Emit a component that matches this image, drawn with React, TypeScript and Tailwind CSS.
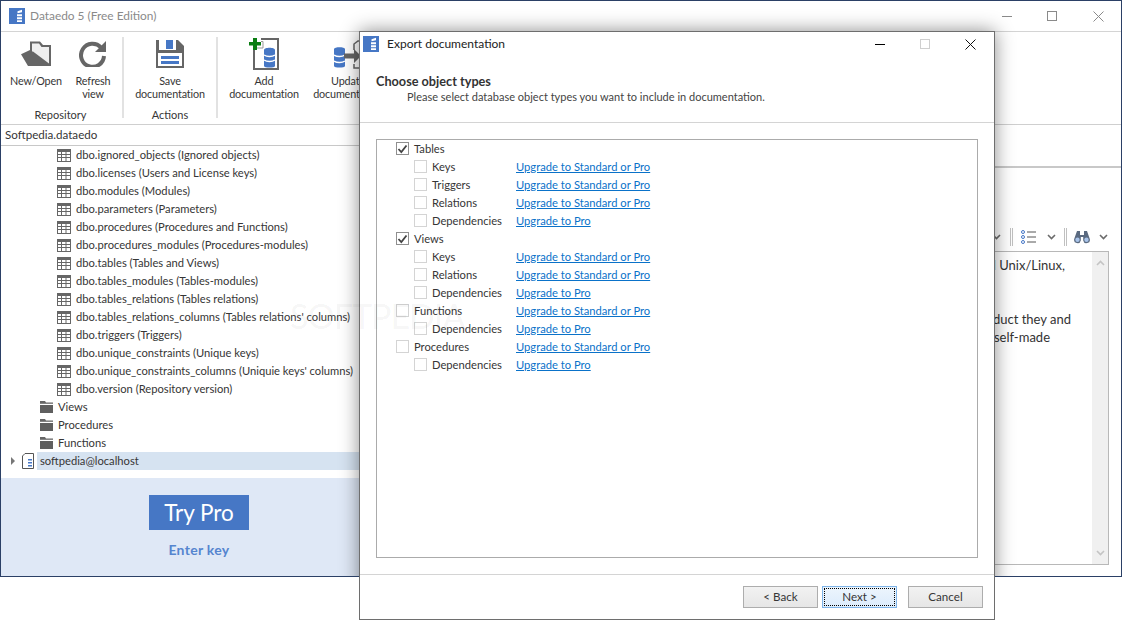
import React from "react";

const F = "font-['Lato','Open_Sans',sans-serif]";

function Logo({ s = 16 }: { s?: number }) {
  return (
    <svg width={s} height={s} viewBox="0 0 16 16" className="shrink-0">
      <rect width="16" height="16" fill="#4677c5" />
      <path d="M8.500 3.200 13 1.800v2.400L8.500 5.200zM8 6.200h5v2H8zM8 9.200h5v2H8zM8 12.200h5V14H8z" fill="#fff" />
    </svg>
  );
}

function GridIcon() {
  return (
    <svg width="14" height="13" viewBox="0 0 14 13" className="shrink-0">
      <rect width="14" height="13" fill="#666" />
      <path d="M1 3h3v2H1zM5 3h3.500v2H5zM9.500 3H13v2H9.500zM1 6h3v2H1zM5 6h3.500v2H5zM9.500 6H13v2H9.500zM1 9h3v3H1zM5 9h3.500v3H5zM9.500 9H13v3H9.500z" fill="#fff" />
    </svg>
  );
}

function Folder() {
  return (
    <svg width="15" height="14" viewBox="0 0 15 14" className="shrink-0">
      <path d="M1 1h5l1 1.500h7V4H1z" fill="#666" />
      <path d="M1 5h13v8H1z" fill="#5f5f5f" />
      <path d="M1 3.800h13V5H1z" fill="#fff" />
    </svg>
  );
}

function Chevron({ up = false, color = "#6b6b6b" }: { up?: boolean; color?: string }) {
  return (
    <svg width="9" height="6" viewBox="0 0 9 6" className="shrink-0">
      <path d={up ? "M1 5l3.500-3.500L8 5" : "M1 1l3.500 3.500L8 1"} fill="none" stroke={color} strokeWidth="1.600" />
    </svg>
  );
}

function RibbonBtn({ icon, l1, l2, w }: { icon: React.ReactNode; l1: string; l2?: string; w: string }) {
  return (
    <div className={`flex flex-col items-center shrink-0 ${w}`}>
      <div className="h-[37px] shrink-0 flex items-start justify-center">{icon}</div>
      <div className="text-center text-[10.800px] tracking-[-0.15px] leading-[13px] whitespace-nowrap">
        <div>{l1}</div>
        {l2 && <div>{l2}</div>}
      </div>
    </div>
  );
}

const treeRows = [
  "dbo.ignored_objects (Ignored objects)",
  "dbo.licenses (Users and License keys)",
  "dbo.modules (Modules)",
  "dbo.parameters (Parameters)",
  "dbo.procedures (Procedures and Functions)",
  "dbo.procedures_modules (Procedures-modules)",
  "dbo.tables (Tables and Views)",
  "dbo.tables_modules (Tables-modules)",
  "dbo.tables_relations (Tables relations)",
  "dbo.tables_relations_columns (Tables relations' columns)",
  "dbo.triggers (Triggers)",
  "dbo.unique_constraints (Unique keys)",
  "dbo.unique_constraints_columns (Uniquie keys' columns)",
  "dbo.version (Repository version)",
];

const std = "Upgrade to Standard or Pro";
const pro = "Upgrade to Pro";
const options: { label: string; link?: string; top?: boolean; on?: boolean }[] = [
  { label: "Tables", top: true, on: true },
  { label: "Keys", link: std },
  { label: "Triggers", link: std },
  { label: "Relations", link: std },
  { label: "Dependencies", link: pro },
  { label: "Views", top: true, on: true },
  { label: "Keys", link: std },
  { label: "Relations", link: std },
  { label: "Dependencies", link: pro },
  { label: "Functions", top: true, link: std },
  { label: "Dependencies", link: pro },
  { label: "Procedures", top: true, link: std },
  { label: "Dependencies", link: pro },
];

function Check({ on }: { on?: boolean }) {
  return (
    <div className={`w-[13px] h-[13px] border shrink-0 flex items-center justify-center bg-white ${on ? "border-[#8f8f8f]" : "border-[#d4d4d4]"}`}>
      {on && (
        <svg width="11" height="10" viewBox="0 0 11 10">
          <path d="M1.500 5l2.800 3L9.500 1.500" fill="none" stroke="#444" strokeWidth="1.800" />
        </svg>
      )}
    </div>
  );
}

function DlgBtn({ label, focus }: { label: string; focus?: boolean }) {
  return (
    <div className={`w-[75px] h-[22px] border flex items-center justify-center text-[11.600px] ${focus ? "border-[#7fb4e8] bg-gradient-to-b from-[#edf5fd] to-[#dcecfc] p-px" : "border-[#adadad] bg-gradient-to-b from-[#f2f2f2] to-[#e6e6e6]"}`}>
      <div className={`w-full h-full flex items-center justify-center ${focus ? "border border-dotted border-black" : ""}`}>{label}</div>
    </div>
  );
}

export default function App() {
  return (
    <div className={`${F} relative w-[1122px] h-[620px] bg-white overflow-hidden text-[11.200px] text-[#363636]`}>
      {/* main window */}
      <div className="relative w-[1122px] h-[577px] border border-[#2b4066] bg-white overflow-hidden flex flex-col">
        <div className="h-[31px] shrink-0 flex items-center pl-[8px] border-b border-[#d4d4d4]">
          <Logo />
          <span className="ml-[5px] text-[11.900px] text-[#8a8a8a]">Dataedo 5 (Free Edition)</span>
          <div className="ml-auto flex items-center">
            <div className="w-[45px] flex justify-center"><div className="w-[10px] h-px bg-[#8a8a8a]" /></div>
            <div className="w-[45px] flex justify-center mr-[2px]"><div className="w-[10px] h-[10px] border border-[#8a8a8a]" /></div>
            <div className="w-[45px] flex justify-center">
              <svg width="11" height="11" viewBox="0 0 11 11"><path d="M.500.500l10 10M10.500.500l-10 10" stroke="#8a8a8a" fill="none" /></svg>
            </div>
          </div>
        </div>

        {/* ribbon */}
        <div className="h-[93px] shrink-0 flex border-b border-[#cfcfcf] pt-[5px]">
          <div className="w-[123px] shrink-0 flex flex-col border-r-2 border-[#e2e2e2] h-[81px]">
            <div className="flex pl-[5px] h-[70px] shrink-0">
              <RibbonBtn w="w-[60px]" l1="New/Open" icon={
                <svg width="30" height="25" viewBox="0 0 30 25" className="mt-[4px]">
                  <path d="M0 13.300 9 9V.500h10L22 4h8v21H7z" fill="#666" />
                  <path d="M11 2.500h7l2.500 3.500H28v16.500L12 10.500h-1z" fill="#efefef" />
                </svg>
              } />
              <RibbonBtn w="w-[54px]" l1="Refresh" l2="view" icon={
                <svg width="28" height="27" viewBox="0 0 28 27" className="mt-[3px]">
                  <path d="M22 7.500A11.500 11.500 0 1 0 25 16" fill="none" stroke="#666" strokeWidth="4" />
                  <path d="M27 1v11H16z" fill="#666" />
                </svg>
              } />
            </div>
            <div className="text-center text-[11px] leading-[16px] pr-[2px]">Repository</div>
          </div>
          <div className="w-[94px] shrink-0 flex flex-col border-r-2 border-[#e2e2e2] h-[81px]">
            <div className="flex justify-center h-[70px] shrink-0">
              <RibbonBtn w="w-[90px]" l1="Save" l2="documentation" icon={
                <svg width="28" height="28" viewBox="0 0 28 28" className="mt-[3px]">
                  <path d="M0 0h22l6 6v22H0z" fill="#666" />
                  <path d="M3 0h17v10H3z" fill="#fff" />
                  <path d="M10 0h7v9h-7z" fill="#4677c5" />
                  <path d="M2 13h24v13H2z" fill="#fff" />
                  <path d="M5 16h18v3H5zM5 21h18v3H5z" fill="#4677c5" />
                </svg>
              } />
            </div>
            <div className="text-center text-[11px] leading-[16px]">Actions</div>
          </div>
          <div className="flex">
            <RibbonBtn w="w-[92px]" l1="Add" l2="documentation" icon={
              <svg width="30" height="32" viewBox="0 0 30 32" className="mt-[1px]">
                <path d="M12 1h17v30H5V12" fill="none" stroke="#666" strokeWidth="2" />
                <path d="M12 3.500h2V10H8" fill="none" stroke="#999" strokeWidth="1" />
                <path d="M4 0h4v4h4v3.500H8V12H4V7.500H0V4h4z" fill="#0a7d12" />
                <path d="M15 12c0-3 11-3 11 0v16c0 2-11 2-11 0z" fill="#4677c5" />
                <path d="M15 17c3 2 8 2 11 0M15 22c3 2 8 2 11 0" stroke="#fff" strokeWidth="1.500" fill="none" />
              </svg>
            } />
            <RibbonBtn w="w-[76px]" l1="Update" l2="documentation" icon={
              <svg width="28" height="30" viewBox="0 0 28 30" className="mt-[3px]">
                <path d="M20 10V4l4-3h4M20 24v4h8" fill="none" stroke="#666" strokeWidth="1.500" />
                <path d="M0 9c0-2.500 11-2.500 11 0v17c0 2-11 2-11 0z" fill="#4677c5" />
                <path d="M0 15c3 2 8 2 11 0M0 21c3 2 8 2 11 0" stroke="#fff" strokeWidth="1.500" fill="none" />
                <path d="M10 13.500h10V9l7 7-7 7v-4.500H10z" fill="#666" />
              </svg>
            } />
          </div>
        </div>

        {/* body */}
        <div className="flex-1 flex min-h-0">
          <div className="w-[400px] shrink-0 flex flex-col">
            <div className="h-[21px] shrink-0 flex items-center pl-[4px] text-[11.600px] border-b border-[#c8c8c8]">Softpedia.dataedo</div>
            <div className="flex-1 flex flex-col">
              {treeRows.map((t) => (
                <div key={t} className="h-[18px] flex items-center pl-[56px] gap-[5px] whitespace-nowrap">
                  <GridIcon />
                  <span>{t}</span>
                </div>
              ))}
              {["Views", "Procedures", "Functions"].map((t) => (
                <div key={t} className="h-[18px] flex items-center pl-[38px] gap-[4px]">
                  <Folder />
                  <span>{t}</span>
                </div>
              ))}
              <div className="h-[18px] flex items-center">
                <svg width="6" height="8" viewBox="0 0 6 8" className="ml-[9px] shrink-0"><path d="M1 0l4 4-4 4z" fill="#777" /></svg>
                <svg width="12" height="16" viewBox="0 0 12 16" className="ml-[6px] shrink-0">
                  <path d="M3 .500h8.500v15H.500V3z" fill="#fff" stroke="#555" />
                  <path d="M6 6h4v1.500H6zM6 9h4v1.500H6zM6 12h4v1.500H6z" fill="#4677c5" />
                </svg>
                <div className="ml-[3px] flex-1 h-[18px] bg-[#d6e3f1] flex items-center pl-[3px]">softpedia@localhost</div>
              </div>
            </div>
            <div className="h-[98px] shrink-0 bg-[#dfe8f6] flex flex-col pl-[148px]">
              <div className="mt-[17px] w-[100px] h-[35px] bg-[#4677c5] text-white text-[22.500px] flex items-center justify-center">Try Pro</div>
              <div className="mt-[9px] w-[100px] text-center font-bold text-[14px] tracking-[0.3px] text-[#5585cf]">Enter key</div>
            </div>
          </div>

          <div className="flex-1 flex flex-col min-w-0">
            <div className="h-[43px] shrink-0 border-b-2 border-[#c8c8c8]" />
            <div className="h-[83px] shrink-0 flex items-end justify-end pb-[4px]">
              <div className="flex items-center h-[20px]">
                <Chevron />
                <div className="ml-[9px] w-[3px] h-[18px] border-x border-[#c0c0c0]" />
                <svg width="16" height="14" viewBox="0 0 16 14" className="ml-[8px]">
                  <circle cx="2" cy="2" r="1.500" fill="none" stroke="#4677c5" />
                  <circle cx="2" cy="7" r="1.500" fill="none" stroke="#4677c5" />
                  <circle cx="2" cy="12" r="1.500" fill="none" stroke="#4677c5" />
                  <path d="M6 2h9M6 7h9M6 12h9" stroke="#555" />
                </svg>
                <div className="ml-[10px]"><Chevron /></div>
                <div className="ml-[8px] w-[3px] h-[18px] border-x border-[#c0c0c0]" />
                <svg width="16" height="14" viewBox="0 0 16 14" className="ml-[7px]">
                  <path d="M3 1h3v4h4V1h3l2.800 8a3.300 3.300 0 0 1-6.600 1.500V7H6.800v3.500a3.300 3.300 0 0 1-6.600-1.500z" fill="#5a6a80" />
                  <circle cx="3.500" cy="9.800" r="2.200" fill="#a9c4ea" />
                  <circle cx="12.500" cy="9.800" r="2.200" fill="#a9c4ea" />
                </svg>
                <div className="ml-[9px] mr-[13px]"><Chevron /></div>
              </div>
            </div>
            <div className="flex mr-[12px] h-[314px] border border-[#b8b8b8] text-[13px] text-[#333]">
              <div className="flex-1 min-w-0 flex flex-col items-end pt-[4px] leading-[18px] whitespace-nowrap">
                <div className="mr-[27px]">and Unix/Linux,</div>
                <div>&nbsp;</div>
                <div>&nbsp;</div>
                <div className="mr-[21px]">product they and</div>
                <div className="mr-[42px]">self-made</div>
              </div>
              <div className="w-[16px] shrink-0 bg-[#f0f0f0] flex flex-col items-center justify-between py-[8px]">
                <Chevron up color="#c4c4c4" />
                <Chevron color="#c4c4c4" />
              </div>
            </div>
          </div>
        </div>

        {/* dialog shadow, clipped by the main window */}
        <div className="absolute left-[358px] top-[30px] w-[636px] h-[600px] shadow-[0_0_18px_rgba(0,0,0,0.45)]" />
      </div>

      {/* dialog */}
      <div className="absolute left-[359px] top-[31px] w-[636px] h-[589px] bg-white border border-[#6e6e6e] flex flex-col">
        <div className="h-[91px] shrink-0 border-b border-[#d4d4d4] flex flex-col">
          <div className="h-[24px] flex items-center pl-[3px]">
            <Logo />
            <span className="ml-[8px] text-[12px] text-[#222]">Export documentation</span>
            <div className="ml-auto flex items-center mr-[1px]">
              <div className="w-[45px] flex justify-center"><div className="w-[10px] h-px bg-black" /></div>
              <div className="w-[45px] flex justify-center mr-[1px]"><div className="w-[10px] h-[10px] border border-[#cfcfcf]" /></div>
              <div className="w-[45px] flex justify-center">
                <svg width="11" height="11" viewBox="0 0 11 11"><path d="M.500.500l10 10M10.500.500l-10 10" stroke="#111" fill="none" /></svg>
              </div>
            </div>
          </div>
          <div className="mt-[17px] ml-[16px] font-bold text-[12.700px] text-[#333] leading-[16px]">Choose object types</div>
          <div className="ml-[47px] leading-[16px] text-[11px] text-[#444]">Please select database object types you want to include in documentation.</div>
        </div>
        <div className="flex-1 min-h-0 pt-[16px] px-[16px] pb-[16px]">
          <div className="h-full w-[602px] border border-[#ababab] flex flex-col">
            {options.map((o, i) => (
              <div key={i} className="h-[18px] flex items-center shrink-0">
                <div className={`w-[139px] shrink-0 flex items-center gap-[5px] ${o.top ? "pl-[19px]" : "pl-[37px]"}`}>
                  <Check on={o.on} />
                  <span>{o.label}</span>
                </div>
                {o.link && <a className="text-[#0a72c9] underline whitespace-nowrap cursor-pointer">{o.link}</a>}
              </div>
            ))}
          </div>
        </div>
        <div className="h-[45px] shrink-0 border-t border-[#d4d4d4] flex items-center justify-end pr-[11px]">
          <DlgBtn label="< Back" />
          <div className="ml-[4px]"><DlgBtn label="Next >" focus /></div>
          <div className="ml-[11px]"><DlgBtn label="Cancel" /></div>
        </div>
      </div>

      {/* watermark */}
      <div className="absolute left-[290px] top-[290px] text-[34px] tracking-[-1px] text-[#000]/[0.05] pointer-events-none">SOFTPEDIA</div>
    </div>
  );
}
